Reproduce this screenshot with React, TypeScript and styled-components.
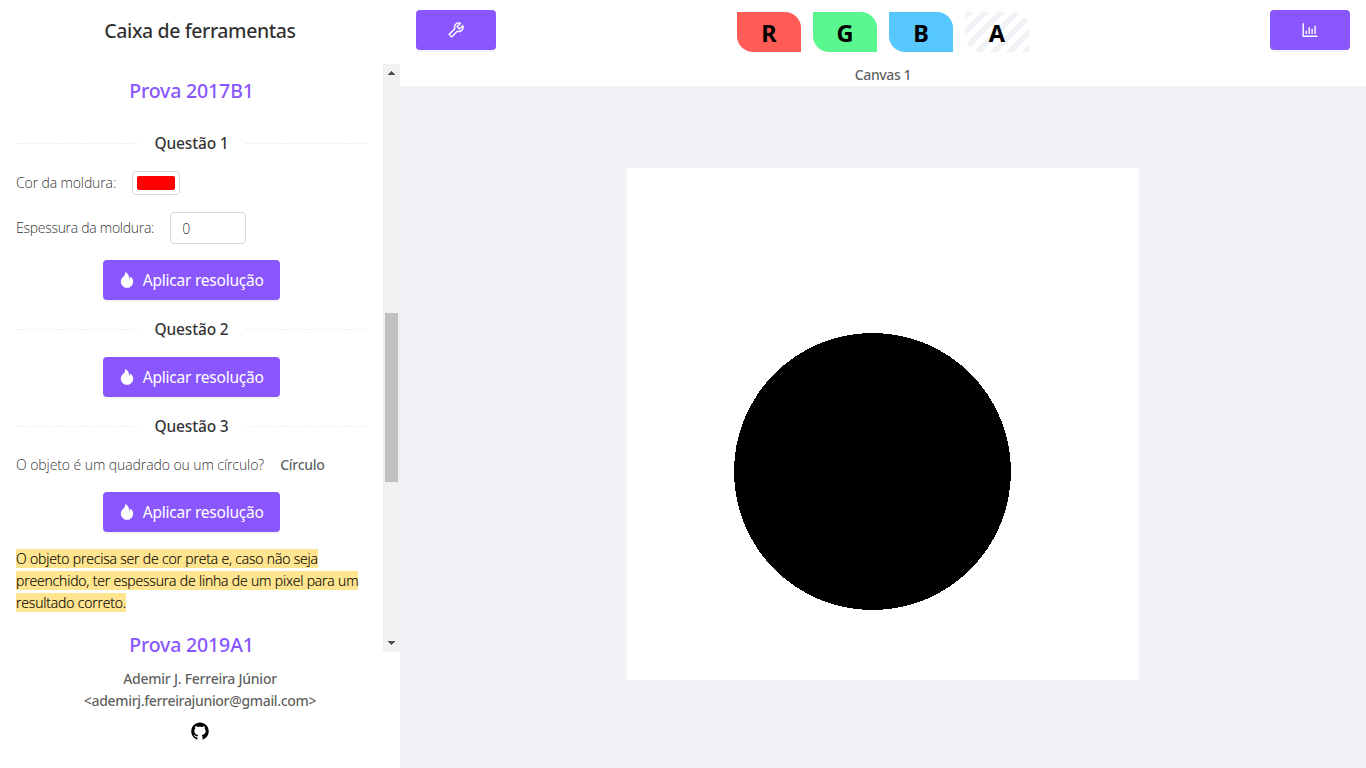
import React from 'react';
import styled, { createGlobalStyle } from 'styled-components';
import { AiFillFire, AiFillGithub, AiOutlineBarChart, AiOutlineTool } from 'react-icons/ai';

const GlobalStyle = createGlobalStyle`
  *, *::before, *::after { box-sizing: border-box; }
  body {
    margin: 0;
    overflow: hidden;
    background: #fff;
    color: rgba(0, 0, 0, 0.65);
    font-family: 'Noto Sans', 'Open Sans', sans-serif;
    font-size: 14px;
    line-height: 22px;
  }
`;

const Page = styled.div`
  display: flex;
  width: 100vw;
  height: 100vh;
`;

const Sidebar = styled.aside`
  display: flex;
  flex-direction: column;
  flex: none;
  width: 400px;
  background: #fff;
`;

const SidebarTitle = styled.h1`
  display: flex;
  align-items: center;
  justify-content: center;
  height: 64px;
  margin: 0;
  padding-bottom: 2px;
  color: rgba(0, 0, 0, 0.82);
  font-size: 19.5px;
  font-weight: 500;
  letter-spacing: -0.4px;
`;

const ScrollArea = styled.div`
  display: flex;
  height: 588px;
`;

const Tools = styled.div`
  display: flex;
  flex-direction: column;
  flex: 1;
  padding: 13px 16px 0;
`;

const ExamTitle = styled.h2`
  flex: none;
  margin: 0;
  color: #8a57ff;
  font-size: 19.5px;
  font-weight: 500;
  line-height: 28px;
  letter-spacing: -0.15px;
  text-align: center;
`;

const Question = styled.h3<{ $top: number }>`
  display: flex;
  flex: none;
  align-items: center;
  gap: 16px;
  margin: ${(p) => p.$top}px 0 0;
  color: rgba(0, 0, 0, 0.82);
  font-size: 15.5px;
  font-weight: 500;
  line-height: 26px;
  letter-spacing: -0.15px;
  white-space: nowrap;

  &::before,
  &::after {
    content: '';
    flex: 1;
    height: 0;
    border-top: 1px dashed #f0f0f0;
  }
`;

const Field = styled.div<{ $top: number }>`
  display: flex;
  flex: none;
  align-items: center;
  gap: 16px;
  margin-top: ${(p) => p.$top}px;
`;

const Label = styled.label<{ $tracking: number }>`
  color: rgba(0, 0, 0, 0.75);
  font-family: 'Open Sans', sans-serif;
  font-weight: 300;
  letter-spacing: ${(p) => p.$tracking}px;
  white-space: nowrap;
  -webkit-text-stroke: 0.1px currentColor;
`;

const ColorPicker = styled.div`
  width: 48px;
  height: 24px;
  padding: 4px;
  border: 1px solid #d9d9d9;
  border-radius: 4px;
`;

const Swatch = styled.div`
  width: 38px;
  height: 14px;
  border-radius: 2px;
  background: #f00;
`;

const NumberInput = styled.input`
  width: 76px;
  height: 32px;
  padding: 0 11px;
  border: 1px solid #d9d9d9;
  border-radius: 4px;
  outline: none;
  color: rgba(0, 0, 0, 0.75);
  font: 300 14px 'Open Sans', sans-serif;
  -webkit-text-stroke: 0.1px currentColor;
`;

const Answer = styled.strong`
  font-weight: 500;
  letter-spacing: -0.25px;
`;

const PrimaryButton = styled.button`
  display: flex;
  flex: none;
  align-items: center;
  justify-content: center;
  height: 40px;
  padding: 0;
  border: 0;
  border-radius: 4px;
  background: #8a57ff;
  box-shadow: 0 2px 0 rgba(0, 0, 0, 0.045);
  color: #fff;
  font: 400 15.5px 'Noto Sans', sans-serif;
`;

const ApplyButton = styled(PrimaryButton)<{ $top: number }>`
  align-self: center;
  gap: 7px;
  width: 177px;
  margin-top: ${(p) => p.$top}px;
  padding-right: 1.5px;
  letter-spacing: -0.23px;
`;

const IconButton = styled(PrimaryButton)`
  width: 80px;
`;

const Note = styled.p`
  flex: none;
  margin: 16px 0 17px;
  color: #000;
  font-family: 'Open Sans', sans-serif;
  font-weight: 300;
  letter-spacing: -0.17px;
  white-space: nowrap;
  -webkit-text-stroke: 0.15px currentColor;
`;

const Mark = styled.mark`
  background: #ffe58f;
  color: inherit;
`;

const Scrollbar = styled.div`
  display: flex;
  flex-direction: column;
  align-items: center;
  width: 17px;
  background: #f1f1f1;
`;

const ScrollArrow = styled.svg`
  flex: none;
  width: 17px;
  height: 17px;
  fill: #505050;
`;

const Thumb = styled.div`
  width: 13px;
  height: 169px;
  margin: 232px 0 auto;
  background: #c1c1c1;
`;

const Footer = styled.footer`
  display: flex;
  flex: 1;
  flex-direction: column;
  align-items: center;
  padding-top: 16px;
  font-weight: 500;
`;

const FooterLine = styled.span<{ $tracking: number }>`
  letter-spacing: ${(p) => p.$tracking}px;
`;

const GithubLink = styled.a`
  display: flex;
  margin-top: 9px;
  color: #000;
  font-size: 20px;
`;

const Main = styled.main`
  display: flex;
  flex: 1;
  flex-direction: column;
  background: #f0f2f5;
`;

const Toolbar = styled.header`
  display: flex;
  align-items: flex-start;
  justify-content: space-between;
  height: 64px;
  padding: 10px 16px 0;
  background: #fff;
`;

const Channels = styled.div`
  display: flex;
  gap: 12px;
  padding-top: 2px;
`;

const stripes = `linear-gradient(135deg, #f0f2f5 25%, #fff 25%, #fff 50%, #f0f2f5 50%, #f0f2f5 75%, #fff 75%)
  0 0 / 16px 16px`;

const Channel = styled.button<{ $fill: string }>`
  width: 64px;
  height: 40px;
  padding: 2px 0 0;
  border: 0;
  border-radius: 0 16px 0 16px;
  background: ${(p) => p.$fill};
  color: #000;
  font: 700 23.5px / 38px 'Noto Sans', sans-serif;
`;

const CanvasTitle = styled.div`
  height: 22px;
  background: #fff;
  font-weight: 500;
  letter-spacing: -0.38px;
  text-align: center;
`;

const Stage = styled.div`
  display: flex;
  flex: 1;
  align-items: center;
  justify-content: center;
  padding-bottom: 6px;
`;

const Drawing = styled.svg`
  width: 512px;
  height: 512px;
  background: #fff;
`;

export default function App() {
  return (
    <>
      <GlobalStyle />
      <Page>
        <Sidebar>
          <SidebarTitle>Caixa de ferramentas</SidebarTitle>
          <ScrollArea>
            <Tools>
              <ExamTitle>Prova 2017B1</ExamTitle>

              <Question $top={25}>Questão 1</Question>
              <Field $top={15}>
                <Label $tracking={-0.12}>Cor da moldura:</Label>
                <ColorPicker>
                  <Swatch />
                </ColorPicker>
              </Field>
              <Field $top={17}>
                <Label $tracking={-0.28}>Espessura da moldura:</Label>
                <NumberInput defaultValue="0" />
              </Field>
              <ApplyButton $top={16}>
                <AiFillFire size={18} />
                Aplicar resolução
              </ApplyButton>

              <Question $top={16}>Questão 2</Question>
              <ApplyButton $top={15}>
                <AiFillFire size={18} />
                Aplicar resolução
              </ApplyButton>

              <Question $top={16}>Questão 3</Question>
              <Field $top={15}>
                <Label $tracking={-0.08}>O objeto é um quadrado ou um círculo?</Label>
                <Answer>Círculo</Answer>
              </Field>
              <ApplyButton $top={16}>
                <AiFillFire size={18} />
                Aplicar resolução
              </ApplyButton>
              <Note>
                <Mark>
                  O objeto precisa ser de cor preta e, caso não seja
                  <br />
                  preenchido, ter espessura de linha de um pixel para um
                  <br />
                  resultado correto.
                </Mark>
              </Note>

              <ExamTitle>Prova 2019A1</ExamTitle>
            </Tools>
            <Scrollbar>
              <ScrollArrow viewBox="0 0 17 17" shapeRendering="crispEdges">
                <path d="M8 7h1v1h1v1h1v1h1v1H5v-1h1V9h1V8h1z" />
              </ScrollArrow>
              <Thumb />
              <ScrollArrow viewBox="0 0 17 17" shapeRendering="crispEdges">
                <path d="M5 6h7v1h-1v1h-1v1H9v1H8V9H7V8H6V7H5z" />
              </ScrollArrow>
            </Scrollbar>
          </ScrollArea>
          <Footer>
            <FooterLine $tracking={-0.25}>Ademir J. Ferreira Júnior</FooterLine>
            <FooterLine $tracking={-0.33}>&lt;ademirj.ferreirajunior@gmail.com&gt;</FooterLine>
            <GithubLink>
              <AiFillGithub />
            </GithubLink>
          </Footer>
        </Sidebar>

        <Main>
          <Toolbar>
            <IconButton>
              <AiOutlineTool size={20} />
            </IconButton>
            <Channels>
              <Channel $fill="#ff5c57">R</Channel>
              <Channel $fill="#5af78e">G</Channel>
              <Channel $fill="#57c7ff">B</Channel>
              <Channel $fill={stripes}>A</Channel>
            </Channels>
            <IconButton>
              <AiOutlineBarChart size={20} />
            </IconButton>
          </Toolbar>
          <CanvasTitle>Canvas 1</CanvasTitle>
          <Stage>
            <Drawing viewBox="0 0 512 512">
              <circle cx="245.5" cy="303.5" r="138.5" shapeRendering="crispEdges" />
            </Drawing>
          </Stage>
        </Main>
      </Page>
    </>
  );
}
